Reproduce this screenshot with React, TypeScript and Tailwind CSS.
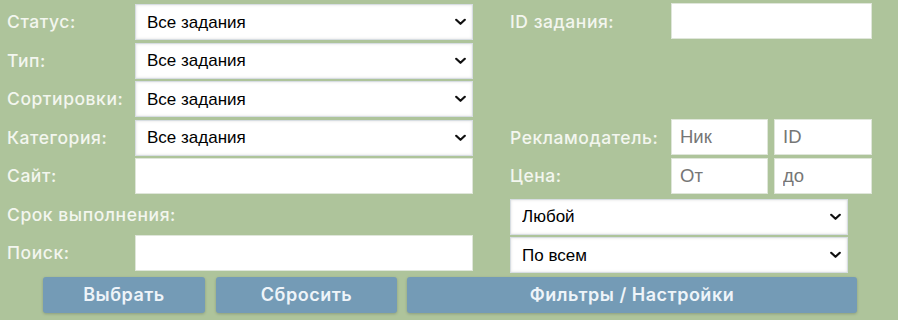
const label = "text-[17.5px] font-medium text-[#f3f6ef] tracking-[0.55px] whitespace-nowrap";
const labelFont = { fontFamily: "Inter, 'Open Sans', sans-serif" };

function Chevron() {
  return (
    <svg width="11" height="7" viewBox="0 0 11 7" className="absolute right-[7px] top-1/2 -translate-y-1/2 pointer-events-none">
      <path d="M1.2 1.2 L5.5 5.3 L9.8 1.2" fill="none" stroke="#111" strokeWidth="2.2" strokeLinecap="round" strokeLinejoin="round" />
    </svg>
  );
}

function Select({ value }: { value: string }) {
  return (
    <div className="relative h-[36px] w-full">
      <select
        defaultValue={value}
        className="appearance-none h-full w-full bg-white border border-[#d7dde2] shadow-[inset_0_0_3px_rgba(0,0,0,0.12)] pl-[11px] text-[17px] text-black outline-none"
        style={{ fontFamily: "'Liberation Sans', Arial, sans-serif" }}
      >
        <option>{value}</option>
      </select>
      <Chevron />
    </div>
  );
}

function Input({ placeholder, className = "" }: { placeholder?: string; className?: string }) {
  return (
    <input
      placeholder={placeholder}
      className={`h-[36px] bg-white border border-[#dfe6da] pl-[8px] text-[18.5px] text-black placeholder:text-[#767676] outline-none ${className}`}
      style={{ fontFamily: "'Liberation Sans', Arial, sans-serif" }}
    />
  );
}

function Label({ children }: { children: string }) {
  return (
    <div className={`${label} flex items-center`} style={labelFont}>
      {children}
    </div>
  );
}

function Btn({ children, className }: { children: string; className: string }) {
  return (
    <button
      className={`h-[36px] rounded-[3px] bg-[#749bb6] text-[#eef4f9] text-[18px] font-semibold tracking-[0.5px] shadow-[0_1px_3px_rgba(0,0,0,0.2)] ${className}`}
      style={labelFont}
    >
      {children}
    </button>
  );
}

export default function App() {
  return (
    <div className="w-[898px] h-[320px] bg-[#aec49b] overflow-hidden pt-[3px]">
      <div className="grid grid-cols-[128px_338px_37px_161px_201px] auto-rows-[38.5px] pl-[7px] items-center">
        <Label>Статус:</Label>
        <Select value="Все задания" />
        <div />
        <Label>ID задания:</Label>
        <Input className="w-[201px] -mt-[3px]" />

        <Label>Тип:</Label>
        <Select value="Все задания" />
        <div />
        <div />
        <div />

        <Label>Сортировки:</Label>
        <Select value="Все задания" />
        <div />
        <div />
        <div />

        <Label>Категория:</Label>
        <Select value="Все задания" />
        <div />
        <Label>Рекламодатель:</Label>
        <div className="flex gap-[6px] -mt-[2px]">
          <Input placeholder="Ник" className="w-[97px]" />
          <Input placeholder="ID" className="w-[98px]" />
        </div>

        <Label>Сайт:</Label>
        <Input className="w-[338px]" />
        <div />
        <Label>Цена:</Label>
        <div className="flex gap-[6px]">
          <Input placeholder="От" className="w-[97px]" />
          <Input placeholder="до" className="w-[98px]" />
        </div>

        <Label>Срок выполнения:</Label>
        <div />
        <div />
        <div className="col-span-2 w-[338px] mt-[4px]">
          <Select value="Любой" />
        </div>

        <Label>Поиск:</Label>
        <Input className="w-[338px]" />
        <div />
        <div className="col-span-2 w-[338px] mt-[4px]">
          <Select value="По всем" />
        </div>
      </div>
      <div className="flex pl-[43px] mt-[4px]">
        <Btn className="w-[162px]">Выбрать</Btn>
        <Btn className="w-[181px] ml-[11px]">Сбросить</Btn>
        <Btn className="w-[450px] ml-[10px]">Фильтры / Настройки</Btn>
      </div>
    </div>
  );
}
